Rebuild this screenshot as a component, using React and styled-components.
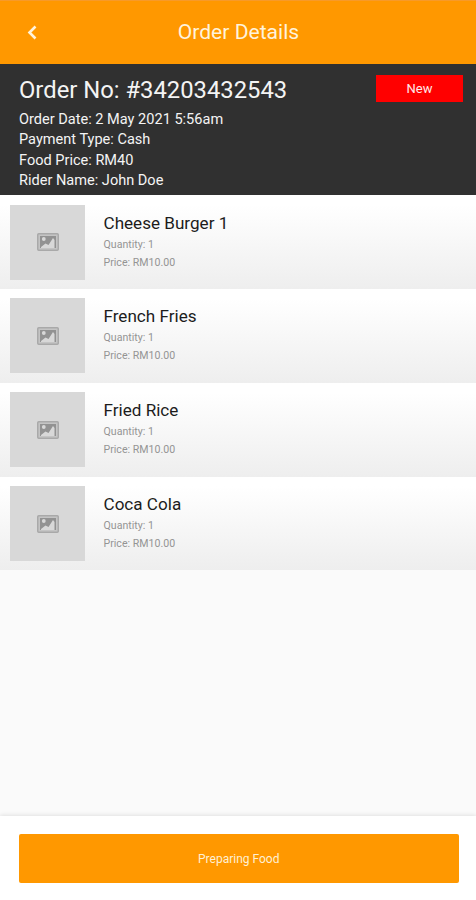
import React from "react";
import styled, { createGlobalStyle } from "styled-components";

const GlobalStyle = createGlobalStyle`
  * {
    box-sizing: border-box;
  }
  body {
    margin: 0;
    font-family: Roboto, sans-serif;
  }
`;

const Screen = styled.div`
  display: flex;
  flex-direction: column;
  height: 900px;
  background: #fafafa;
  overflow: hidden;
`;

// ---------------------- header ----------------------

const Header = styled.header`
  display: grid;
  grid-template-columns: 64px 1fr 64px;
  align-items: center;
  height: 64px;
  flex-shrink: 0;
  padding-bottom: 1px;
  background: #ff9800;
  border-top: 1px solid #f79a2a;
`;

const BackButton = styled.button`
  display: flex;
  justify-content: center;
  padding: 0;
  border: 0;
  background: none;
  color: #fff3dc;
`;

const Title = styled.h1`
  margin: 0;
  padding-left: 1px;
  font-size: 21.1px;
  font-weight: 400;
  line-height: 26px;
  text-align: center;
  color: #fff3dc;
`;

// ---------------------- order summary ----------------------

const Summary = styled.section`
  display: flex;
  justify-content: space-between;
  align-items: flex-start;
  height: 131.3px;
  flex-shrink: 0;
  padding: 11px 13px 0 19px;
  background: #303030;
  color: #f4f4f4;
`;

const OrderNo = styled.h2`
  margin: 0 0 3.5px;
  font-size: 23.8px;
  font-weight: 400;
  line-height: 31px;
`;

const Detail = styled.p`
  margin: 0;
  font-size: 14.55px;
  line-height: 20.6px;
`;

const Status = styled.span`
  width: 87px;
  height: 27px;
  background: #ff0000;
  color: #ffe9e9;
  font-size: 13px;
  line-height: 28px;
  text-align: center;
`;

// ---------------------- items ----------------------

const List = styled.ul`
  flex: 1;
  margin: 0;
  padding: 0;
  list-style: none;
`;

const Item = styled.li`
  display: flex;
  gap: 18.5px;
  height: 93.8px;
  padding: 9.4px 10px;
  background: linear-gradient(#ffffff 10%, #eeeeee);
`;

const Thumb = styled.div`
  display: flex;
  align-items: center;
  justify-content: center;
  width: 75px;
  height: 75px;
  background: #d8d8d8;
`;

const ItemName = styled.h3`
  margin: 6px 0 1px;
  font-size: 17.1px;
  font-weight: 400;
  line-height: 24px;
  color: #1c1c1c;
`;

const ItemInfo = styled.p`
  margin: 0;
  font-size: 10.6px;
  line-height: 18px;
  color: #949494;
`;

// ---------------------- footer ----------------------

const Footer = styled.footer`
  height: 84px;
  flex-shrink: 0;
  padding: 17.5px 17.5px 0 19px;
  background: #ffffff;
  box-shadow: 0 -1px 4px rgba(0, 0, 0, 0.1);
`;

const Action = styled.button`
  display: block;
  width: 100%;
  height: 49px;
  padding: 1px 0 0;
  border: 0;
  border-radius: 2px;
  background: #ff9800;
  color: #fff0d4;
  font-family: inherit;
  font-size: 12px;
`;

const items = [
  { name: "Cheese Burger 1", quantity: 1, price: "RM10.00" },
  { name: "French Fries", quantity: 1, price: "RM10.00" },
  { name: "Fried Rice", quantity: 1, price: "RM10.00" },
  { name: "Coca Cola", quantity: 1, price: "RM10.00" },
];

function BackIcon() {
  return (
    <svg width="10" height="15" viewBox="0 0 10 15" fill="none">
      <path d="M8.5 1.5 2.5 7.5l6 6" stroke="currentColor" strokeWidth="2.6" />
    </svg>
  );
}

function PictureIcon() {
  return (
    <svg width="22" height="18" viewBox="0 0 22 18">
      <rect x="0.75" y="0.75" width="20.5" height="16.5" rx="1" fill="#c4c4c4" stroke="#a9a9a9" strokeWidth="1.5" />
      <rect x="3" y="3" width="16" height="12" fill="#929292" />
      <circle cx="6.8" cy="6" r="1.9" fill="#d8d8d8" />
      <path d="M4 15v-1l4.5-3.5 3 1.5L16 5l1.5 2v8z" fill="#d8d8d8" />
    </svg>
  );
}

function OrderItem({ name, quantity, price }) {
  return (
    <Item>
      <Thumb>
        <PictureIcon />
      </Thumb>
      <div>
        <ItemName>{name}</ItemName>
        <ItemInfo>Quantity: {quantity}</ItemInfo>
        <ItemInfo>Price: {price}</ItemInfo>
      </div>
    </Item>
  );
}

const App = () => {
  return (
    <Screen>
      <GlobalStyle />
      <Header>
        <BackButton aria-label="Back">
          <BackIcon />
        </BackButton>
        <Title>Order Details</Title>
      </Header>
      <Summary>
        <div>
          <OrderNo>Order No: #34203432543</OrderNo>
          <Detail>Order Date: 2 May 2021 5:56am</Detail>
          <Detail>Payment Type: Cash</Detail>
          <Detail>Food Price: RM40</Detail>
          <Detail>Rider Name: John Doe</Detail>
        </div>
        <Status>New</Status>
      </Summary>
      <List>
        {items.map((item) => (
          <OrderItem key={item.name} {...item} />
        ))}
      </List>
      <Footer>
        <Action>Preparing Food</Action>
      </Footer>
    </Screen>
  );
};

export default App;
